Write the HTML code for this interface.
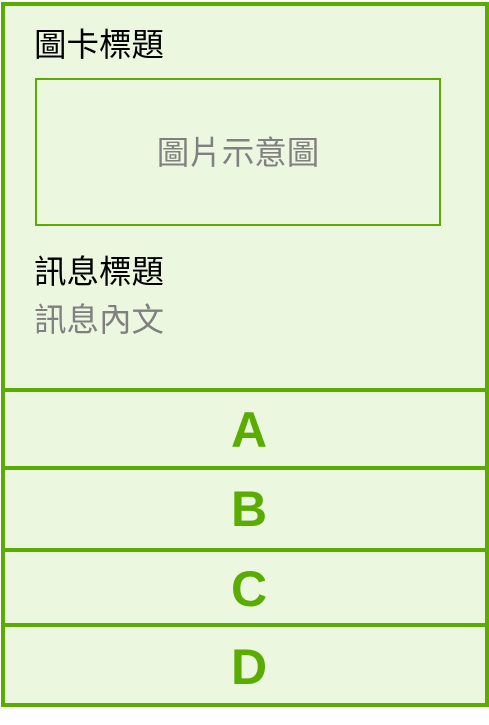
<!DOCTYPE html>
<html><head><meta charset="utf-8"><style>
*{margin:0;padding:0;box-sizing:border-box}
body{width:489px;height:725px;background:#fff;position:relative;overflow:hidden;font-family:"Liberation Sans","WenQuanYi Zen Hei","Noto Sans CJK TC",sans-serif}
.bg{position:absolute;left:1px;top:2px;width:488px;height:705px;background:#ebf7df;border:4px solid #5aad00}
.hl{position:absolute;left:1px;width:488px;height:4px;background:#5aad00}
.t{position:absolute;font-size:32.5px;line-height:32px;white-space:nowrap}
.img{position:absolute;left:35px;top:78px;width:406px;height:148px;border:2px solid #5aad00;color:#808080;font-size:32.5px;display:flex;align-items:center;justify-content:center;padding-bottom:3px}
.L{position:absolute;left:5px;width:488px;text-align:center;color:#5aad00;font-weight:bold;font-size:50px;font-family:"Liberation Sans",sans-serif}
</style></head><body>
<div class="bg"></div>
<div class="t" style="left:34px;top:29px;color:#000">圖卡標題</div>
<div class="img">圖片示意圖</div>
<div class="t" style="left:34px;top:256px;color:#000">訊息標題</div>
<div class="t" style="left:34px;top:304px;color:#808080">訊息內文</div>
<div class="hl" style="top:388px"></div>
<div class="hl" style="top:466px"></div>
<div class="hl" style="top:548px"></div>
<div class="hl" style="top:623px"></div>
<div class="L" style="top:400px;line-height:60px">A</div>
<div class="L" style="top:479px;line-height:60px">B</div>
<div class="L" style="top:559px;line-height:60px">C</div>
<div class="L" style="top:637px;line-height:60px">D</div>
</body></html>
